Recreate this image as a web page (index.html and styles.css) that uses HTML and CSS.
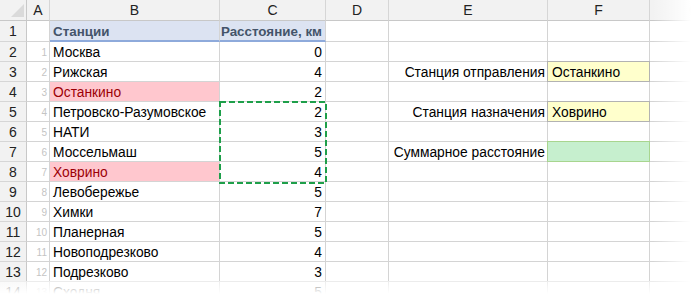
FILE: index.html
```html
<!DOCTYPE html>
<html lang="ru">
<head>
<meta charset="utf-8">
<title>Станции</title>
<link rel="stylesheet" href="styles.css">
</head>
<body>
<div class="sheet">
  <div class="grid">
    <div class="corner"><svg width="27" height="21" viewBox="0 0 27 21"><polygon points="24,4 24,17 11,17" fill="#dadada"/></svg></div>
    <div class="ch">A</div><div class="ch">B</div><div class="ch">C</div><div class="ch">D</div><div class="ch">E</div><div class="ch">F</div><div class="ch ch-g">G</div>

    <div class="rh">1</div><div class="c"></div><div class="c th">Станции</div><div class="c th r">Расстояние, км</div><div class="c"></div><div class="c"></div><div class="c"></div><div class="c"></div>

    <div class="rh">2</div><div class="c idx">1</div><div class="c">Москва</div><div class="c r">0</div><div class="c"></div><div class="c"></div><div class="c"></div><div class="c"></div>

    <div class="rh">3</div><div class="c idx">2</div><div class="c">Рижская</div><div class="c r">4</div><div class="c"></div><div class="c r lbl">Станция отправления</div><div class="c input">Останкино</div><div class="c"></div>

    <div class="rh">4</div><div class="c idx">3</div><div class="c bad">Останкино</div><div class="c r">2</div><div class="c"></div><div class="c"></div><div class="c"></div><div class="c"></div>

    <div class="rh">5</div><div class="c idx">4</div><div class="c">Петровско-Разумовское</div><div class="c r">2</div><div class="c"></div><div class="c r lbl">Станция назначения</div><div class="c input">Ховрино</div><div class="c"></div>

    <div class="rh">6</div><div class="c idx">5</div><div class="c">НАТИ</div><div class="c r">3</div><div class="c"></div><div class="c"></div><div class="c"></div><div class="c"></div>

    <div class="rh">7</div><div class="c idx">6</div><div class="c">Моссельмаш</div><div class="c r">5</div><div class="c"></div><div class="c r lbl">Суммарное расстояние</div><div class="c good"></div><div class="c"></div>

    <div class="rh">8</div><div class="c idx">7</div><div class="c bad">Ховрино</div><div class="c r">4</div><div class="c"></div><div class="c"></div><div class="c"></div><div class="c"></div>

    <div class="rh">9</div><div class="c idx">8</div><div class="c">Левобережье</div><div class="c r">5</div><div class="c"></div><div class="c"></div><div class="c"></div><div class="c"></div>

    <div class="rh">10</div><div class="c idx">9</div><div class="c">Химки</div><div class="c r">7</div><div class="c"></div><div class="c"></div><div class="c"></div><div class="c"></div>

    <div class="rh">11</div><div class="c idx">10</div><div class="c">Планерная</div><div class="c r">5</div><div class="c"></div><div class="c"></div><div class="c"></div><div class="c"></div>

    <div class="rh">12</div><div class="c idx">11</div><div class="c">Новоподрезково</div><div class="c r">4</div><div class="c"></div><div class="c"></div><div class="c"></div><div class="c"></div>

    <div class="rh">13</div><div class="c idx">12</div><div class="c">Подрезково</div><div class="c r">3</div><div class="c"></div><div class="c"></div><div class="c"></div><div class="c"></div>

    <div class="rh">14</div><div class="c idx">13</div><div class="c">Сходня</div><div class="c r">5</div><div class="c"></div><div class="c"></div><div class="c"></div><div class="c"></div>

    <div class="marquee"><svg width="108" height="83" viewBox="0 0 108 83"><rect x="1" y="1" width="106" height="81" fill="none" stroke="#1e9f4a" stroke-width="2" stroke-dasharray="6 3"/></svg></div>
  </div>
  <div class="fade-right"></div>
  <div class="fade-bottom"></div>
</div>
</body>
</html>
```

FILE: styles.css
```css
html, body {
  margin: 0;
  padding: 0;
  background: #fff;
}
body {
  width: 695px;
  height: 297px;
  overflow: hidden;
  font-family: "Liberation Sans", Arial, sans-serif;
  font-size: 13.8px;
  color: #000;
}
.sheet {
  position: relative;
  width: 695px;
  height: 297px;
  overflow: hidden;
}
.grid {
  position: relative;
  display: grid;
  grid-template-columns: 27px 23px 170px 106px 63px 159px 102px 90px;
  grid-template-rows: 21px 21px repeat(13, 20px);
}
.grid > div {
  box-sizing: border-box;
}
.corner {
  background: #f2f2f2;
  border-right: 1px solid #c8c8c8;
  border-bottom: 1px solid #c8c8c8;
}
.corner svg { display: block; }
.ch {
  background: #f2f2f2;
  border-right: 1px solid #d6d6d6;
  border-bottom: 1px solid #c8c8c8;
  display: flex;
  align-items: center;
  justify-content: center;
  font-size: 14px;
  color: #222;
}
.ch-g { color: #888; }
.rh {
  background: #f2f2f2;
  border-right: 1px solid #c8c8c8;
  border-bottom: 1px solid #d6d6d6;
  display: flex;
  align-items: center;
  justify-content: center;
  font-size: 14px;
  color: #222;
}
.c {
  border-right: 1px solid #d4d4d4;
  border-bottom: 1px solid #d4d4d4;
  display: flex;
  align-items: center;
  padding: 1px 3px 0;
  white-space: nowrap;
  overflow: visible;
}
.r { justify-content: flex-end; }
.lbl { padding-right: 2px; }
.th {
  background: #dce3f2;
  border-bottom: 2px solid #8eaadb;
  font-weight: bold;
  font-size: 13.4px;
  color: #44546a;
}
.idx {
  justify-content: flex-end;
  font-size: 10px;
  color: #c4c4c4;
  padding-right: 2px;
}
.bad {
  background: #ffc7ce;
  color: #9c0006;
}
.input {
  background: #ffffcc;
  border: 1px solid #b2b2b2;
  margin: -1px 0 0 -1px;
  padding-left: 4px;
}
.good {
  background: #c6efce;
  border: 1px solid #a8d58f;
  margin: -1px 0 0 -1px;
}
.marquee {
  position: absolute;
  grid-row: 6 / 10;
  grid-column: 4 / 5;
  top: -1px;
  left: -1px;
  width: 108px;
  height: 83px;
  pointer-events: none;
}
.marquee svg { display: block; }
.fade-right {
  position: absolute;
  top: 0;
  right: 0;
  width: 42px;
  height: 297px;
  background: linear-gradient(to right, rgba(255,255,255,0), #fff 90%);
}
.fade-bottom {
  position: absolute;
  left: 0;
  bottom: 0;
  width: 695px;
  height: 16px;
  background: linear-gradient(to bottom, rgba(255,255,255,0.55), #fff 80%);
}
```
